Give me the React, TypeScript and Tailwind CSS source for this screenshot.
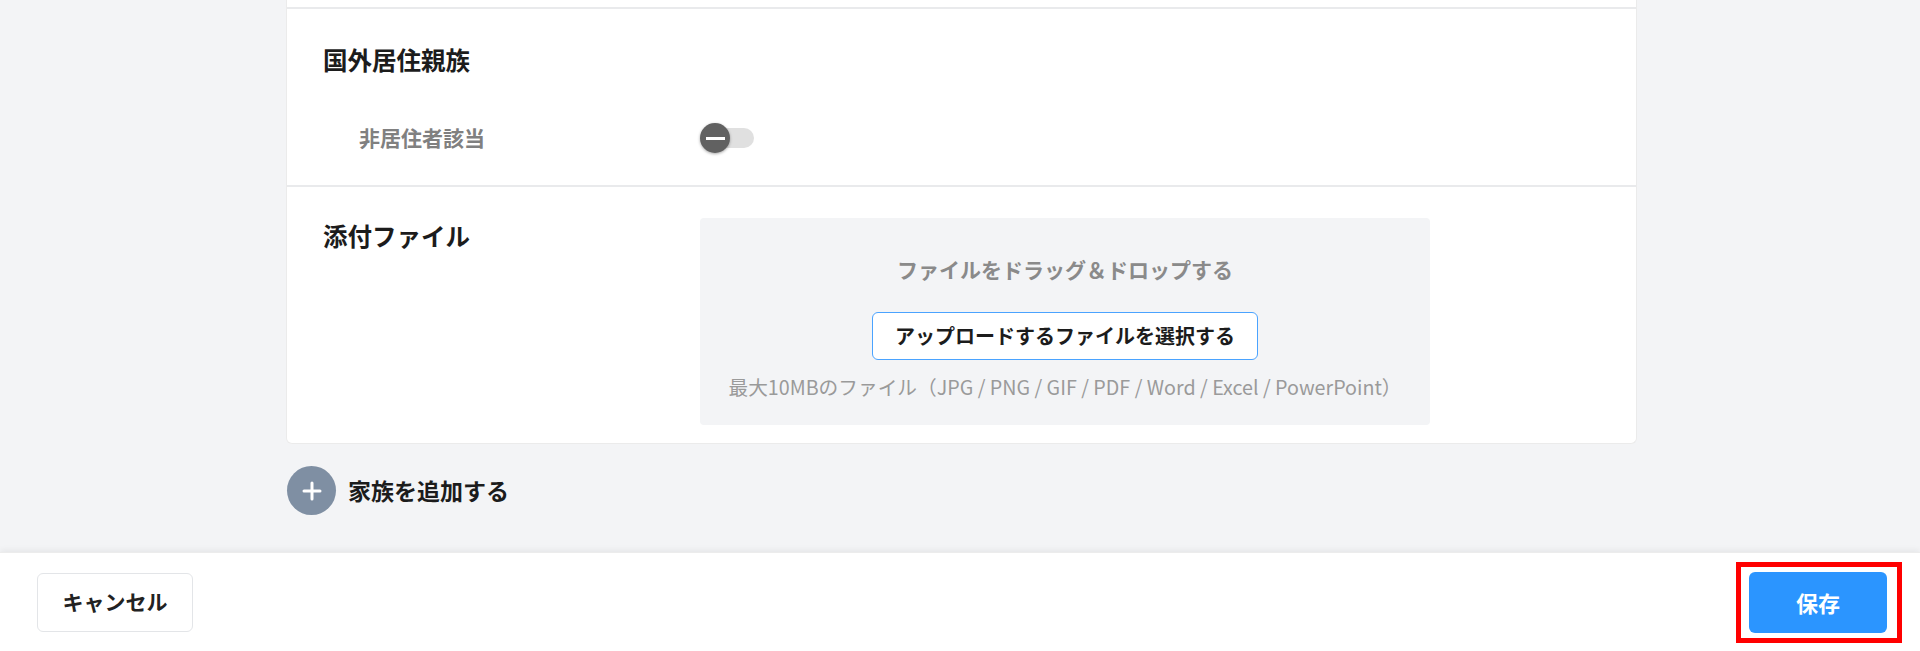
import React from 'react';

const font = { fontFamily: '"Noto Sans CJK JP", "Noto Sans", sans-serif' };

// ─── Toggle ────────────────────────────────────────────────────────────────

function Toggle() {
  return (
    <div className="relative w-[56px] h-[30px]">
      <div className="absolute left-[4px] top-[5px] w-[50px] h-[20px] rounded-full bg-[#e0e0e0]" />
      <div className="absolute left-0 top-0 w-[30px] h-[30px] rounded-full bg-[#616161] shadow-[0_1px_3px_rgba(0,0,0,0.35)] flex items-center justify-center">
        <div className="w-[19px] h-[3px] bg-white" />
      </div>
    </div>
  );
}

// ─── Page ──────────────────────────────────────────────────────────────────

export default function App() {
  return (
    <div className="h-screen flex flex-col bg-[#f3f4f6] overflow-hidden" style={font}>
      <main className="h-[552px] shrink-0">
        <div className="w-[1351px] ml-[286px] bg-white border-x border-b border-[#ebebeb] rounded-b-md">
          <div className="h-[9px] border-b-2 border-[#e9eaec]" />

          {/* 国外居住親族 */}
          <section className="h-[178px] border-b-2 border-[#e9eaec] pl-[36px] pt-[33px]">
            <h2 className="text-[24.5px] leading-[36px] font-bold text-[#1c1c1c]">国外居住親族</h2>
            <div className="mt-[40px] flex items-center h-[40px]">
              <div className="w-[377px] pl-[36px] text-[21px] font-bold text-[#808080]">非居住者該当</div>
              <Toggle />
            </div>
          </section>

          {/* 添付ファイル */}
          <section className="flex items-start pl-[36px] pt-[31px] pb-[18px]">
            <h2 className="w-[377px] text-[24.5px] leading-[36px] font-bold text-[#1c1c1c]">添付ファイル</h2>
            <div className="w-[730px] h-[207px] rounded bg-[#f3f4f6] flex flex-col items-center pt-[36px]">
              <p className="text-[21px] leading-[30px] font-bold text-[#8a8a8a]">ファイルをドラッグ＆ドロップする</p>
              <button className="mt-[28px] w-[386px] h-[48px] rounded-md border border-[#4aa3ff] bg-white text-[20px] font-bold text-[#1c1c1c]">
                アップロードするファイルを選択する
              </button>
              <p className="mt-[13px] text-[19.7px] leading-[28px] text-[#9a9a9a]">
                最大10MBのファイル（JPG / PNG / GIF / PDF / Word / Excel / PowerPoint）
              </p>
            </div>
          </section>
        </div>

        <div className="ml-[287px] mt-[22px] flex items-center gap-[12px]">
          <div className="w-[49px] h-[49px] rounded-full bg-[#7f8fa3] flex items-center justify-center">
            <svg width="20" height="20" viewBox="0 0 20 20" fill="none" stroke="white" strokeWidth="3" strokeLinecap="round">
              <path d="M10 2v16M2 10h16" />
            </svg>
          </div>
          <span className="text-[23px] font-bold text-[#1c1c1c]">家族を追加する</span>
        </div>
      </main>

      <footer className="flex-1 bg-white shadow-[0_-2px_6px_rgba(0,0,0,0.06)] border-t border-[#ececec] flex items-center justify-between pl-[37px] pr-[33px]">
        <button className="w-[156px] h-[59px] rounded-md border border-[#e3e5e8] bg-white text-[21px] font-bold text-[#222]">
          キャンセル
        </button>
        <div className="relative">
          <button className="w-[138px] h-[61px] rounded-md bg-[#2b95ff] text-[22px] font-bold text-white">保存</button>
          <div className="absolute -left-[13px] -right-[15px] -top-[10px] -bottom-[10px] border-[5px] border-[#ff0000] pointer-events-none" />
        </div>
      </footer>
    </div>
  );
}
